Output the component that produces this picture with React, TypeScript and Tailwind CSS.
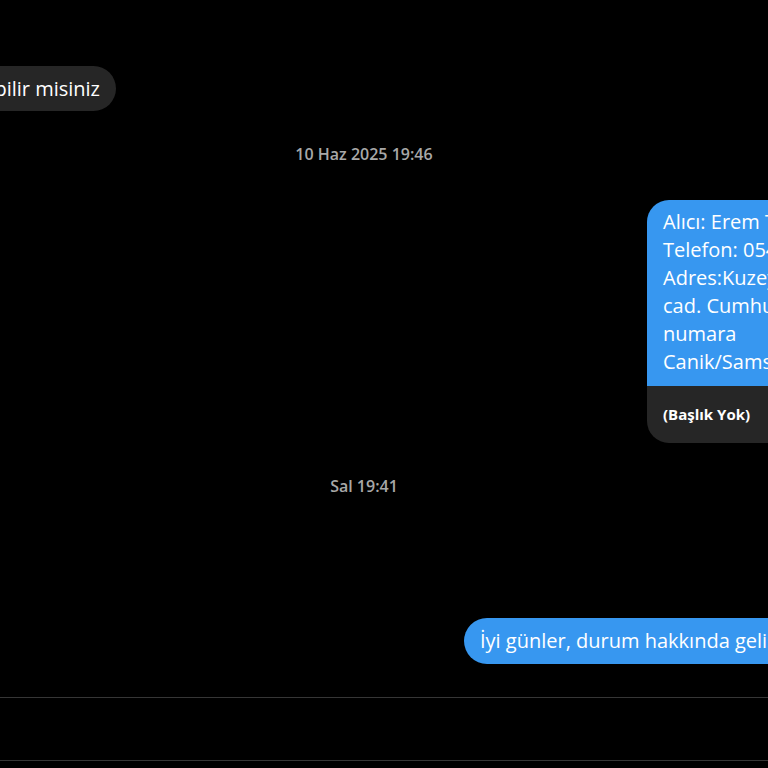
export default function App() {
  return (
    <div
      className="h-[768px] w-full overflow-hidden bg-black text-white"
      style={{ fontFamily: '"Open Sans", "Noto Sans", sans-serif' }}
    >
      <div className="flex flex-col pt-[66px]">
        {/* incoming message, cut off on the left */}
        <div className="flex w-[116px] justify-end">
          <div className="h-[45px] shrink-0 whitespace-nowrap rounded-full bg-[#262626] px-4 text-[20px] leading-[45px]">
            Kargo takip numarasını paylaşabilir misiniz
          </div>
        </div>

        <div className="mt-[33px] pr-[40px] text-center text-[16px] font-semibold leading-5 text-[#a8a8a8]">
          10 Haz 2025 19:46
        </div>

        {/* shared note, cut off on the right */}
        <div className="mt-[36px] flex pl-[647px]">
          <div className="w-[320px] shrink-0 overflow-hidden rounded-[22px]">
            <div className="bg-[#3797f0] pb-[10px] pl-4 pt-2 text-[20px] leading-7">
              <div className="whitespace-nowrap">Alıcı: Erem Tekin</div>
              <div className="whitespace-nowrap">Telefon: 0541 000 00 00</div>
              <div className="whitespace-nowrap">Adres:Kuzey mah. Kılıç</div>
              <div className="whitespace-nowrap">cad. Cumhuriyet sok. 12</div>
              <div className="whitespace-nowrap">numara</div>
              <div className="whitespace-nowrap">Canik/Samsun</div>
            </div>
            <div className="flex h-[57px] items-center bg-[#262626] pl-4 text-[15px] font-bold">
              (Başlık Yok)
            </div>
          </div>
        </div>

        <div className="mt-[33px] pr-[40px] text-center text-[16px] font-semibold leading-5 text-[#a8a8a8]">
          Sal 19:41
        </div>

        <div className="mt-[122px] flex pl-[464px]">
          <div className="h-[46px] shrink-0 whitespace-nowrap rounded-full bg-[#3797f0] px-4 text-[20px] leading-[46px]">
            İyi günler, durum hakkında gelişme var mı?
          </div>
        </div>

        <div className="mt-[33px] h-[63px] border-t border-[#363636]" />
        <div className="border-t border-[#363636]" />
      </div>
    </div>
  )
}
